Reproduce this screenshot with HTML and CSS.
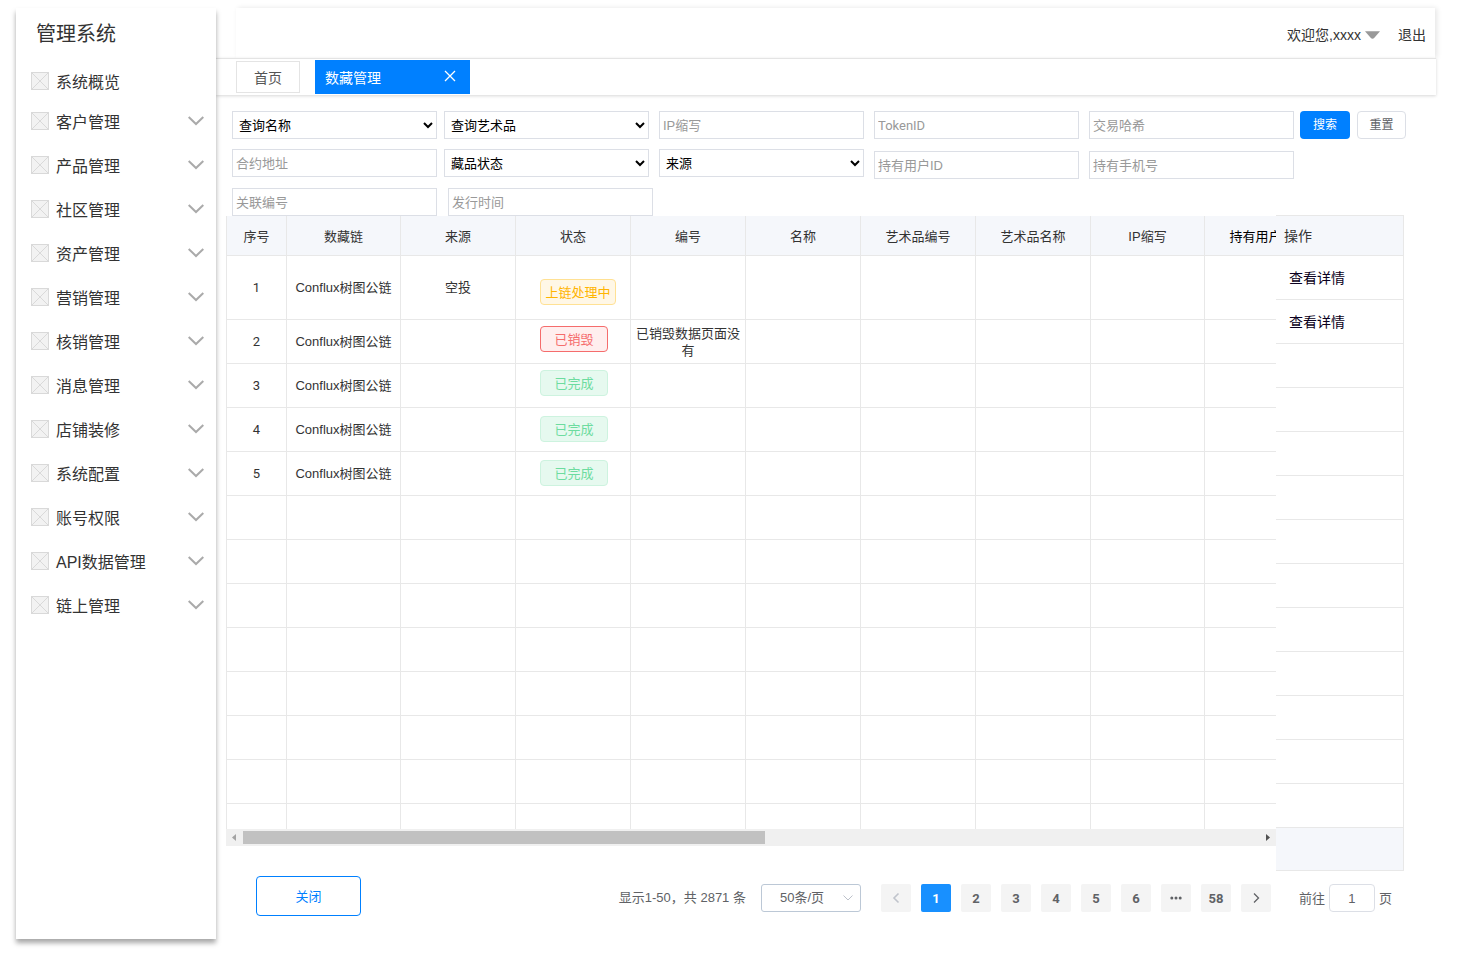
FILE: index.html
```html
<!DOCTYPE html>
<html lang="zh-CN">
<head>
<meta charset="utf-8">
<title>管理系统</title>
<link rel="stylesheet" href="styles.css">
</head>
<body>
<svg class="defs" width="0" height="0" aria-hidden="true">
  <symbol id="box" viewBox="0 0 18 18"><rect x=".5" y=".5" width="17" height="17" fill="#f2f2f2" stroke="#d9d9d9"/><path d="M1 1L17 17M17 1L1 17" stroke="#d9d9d9" fill="none"/></symbol>
  <symbol id="down" viewBox="0 0 16 10"><path d="M.7 1L8 8L15.300 1" stroke="#aaa" stroke-width="2" fill="none"/></symbol>
</svg>
<div class="shell">
  <nav class="sidebar">
    <h1 class="brand">管理系统</h1>
    <ul class="menu">
      <li><a class="item item-first" href="#"><svg class="box"><use href="#box"/></svg><span>系统概览</span></a></li>
      <li><a class="item" href="#"><svg class="box"><use href="#box"/></svg><span>客户管理</span><svg class="down"><use href="#down"/></svg></a></li>
      <li><a class="item" href="#"><svg class="box"><use href="#box"/></svg><span>产品管理</span><svg class="down"><use href="#down"/></svg></a></li>
      <li><a class="item" href="#"><svg class="box"><use href="#box"/></svg><span>社区管理</span><svg class="down"><use href="#down"/></svg></a></li>
      <li><a class="item" href="#"><svg class="box"><use href="#box"/></svg><span>资产管理</span><svg class="down"><use href="#down"/></svg></a></li>
      <li><a class="item" href="#"><svg class="box"><use href="#box"/></svg><span>营销管理</span><svg class="down"><use href="#down"/></svg></a></li>
      <li><a class="item" href="#"><svg class="box"><use href="#box"/></svg><span>核销管理</span><svg class="down"><use href="#down"/></svg></a></li>
      <li><a class="item" href="#"><svg class="box"><use href="#box"/></svg><span>消息管理</span><svg class="down"><use href="#down"/></svg></a></li>
      <li><a class="item" href="#"><svg class="box"><use href="#box"/></svg><span>店铺装修</span><svg class="down"><use href="#down"/></svg></a></li>
      <li><a class="item" href="#"><svg class="box"><use href="#box"/></svg><span>系统配置</span><svg class="down"><use href="#down"/></svg></a></li>
      <li><a class="item" href="#"><svg class="box"><use href="#box"/></svg><span>账号权限</span><svg class="down"><use href="#down"/></svg></a></li>
      <li><a class="item" href="#"><svg class="box"><use href="#box"/></svg><span>API数据管理</span><svg class="down"><use href="#down"/></svg></a></li>
      <li><a class="item" href="#"><svg class="box"><use href="#box"/></svg><span>链上管理</span><svg class="down"><use href="#down"/></svg></a></li>
    </ul>
  </nav>

  <main class="main">
    <header class="topbar">
      <button class="user" type="button">欢迎您,xxxx<svg class="caret" viewBox="0 0 16 8"><path d="M0 0H16L10 7Q8 9 6 7Z" fill="#999"/></svg></button>
      <a class="logout" href="#">退出</a>
    </header>
    <div class="tabs">
      <a class="tab" href="#">首页</a>
      <div class="tab-active"><span>数藏管理</span><button class="tab-close" type="button" aria-label="关闭标签"><svg width="12" height="12" viewBox="0 0 12 12"><path d="M1 1L11 11M11 1L1 11" stroke="#fff" stroke-width="1.300" fill="none"/></svg></button></div>
    </div>

    <form class="filters">
      <div class="filter-top">
        <div class="fields">
          <div class="group group-a">
            <select class="field field-select" aria-label="查询名称"><option>查询名称</option></select>
            <select class="field field-select" aria-label="查询艺术品"><option>查询艺术品</option></select>
            <input class="field" aria-label="合约地址" placeholder="合约地址">
            <select class="field field-select" aria-label="藏品状态"><option>藏品状态</option></select>
          </div>
          <div class="group group-b">
            <input class="field" aria-label="IP缩写" placeholder="IP缩写">
            <select class="field field-select" aria-label="来源"><option>来源</option></select>
          </div>
          <div class="group group-c">
            <input class="field field-latin" aria-label="TokenID" placeholder="TokenID">
            <input class="field" aria-label="交易哈希" placeholder="交易哈希">
            <input class="field" aria-label="持有用户ID" placeholder="持有用户ID">
            <input class="field" aria-label="持有手机号" placeholder="持有手机号">
          </div>
        </div>
        <div class="actions">
          <button class="btn btn-primary" type="button">搜索</button>
          <button class="btn btn-plain" type="reset">重置</button>
        </div>
      </div>
      <div class="filter-bottom">
        <input class="field" aria-label="关联编号" placeholder="关联编号">
        <input class="field" aria-label="发行时间" placeholder="发行时间">
      </div>
    </form>

    <div class="grid">
      <div class="grid-left">
        <div class="viewport">
          <table class="table">
            <colgroup><col class="c-no"><col class="c-chain"><col class="c-std"><col class="c-std"><col class="c-std"><col class="c-std"><col class="c-std"><col class="c-std"><col class="c-chain"><col class="c-std"></colgroup>
            <thead>
              <tr><th>序号</th><th>数藏链</th><th>来源</th><th>状态</th><th>编号</th><th>名称</th><th>艺术品编号</th><th>艺术品名称</th><th>IP缩写</th><th class="strong">持有用户ID</th></tr>
            </thead>
            <tbody>
              <tr class="tall"><td class="num">1</td><td>Conflux树图公链</td><td>空投</td><td class="status status-low"><span class="tag tag-pending">上链处理中</span></td><td></td><td></td><td></td><td></td><td></td><td></td></tr>
              <tr><td class="num">2</td><td>Conflux树图公链</td><td></td><td class="status status-high"><span class="tag tag-destroyed">已销毁</span></td><td>已销毁数据页面没有</td><td></td><td></td><td></td><td></td><td></td></tr>
              <tr><td class="num">3</td><td>Conflux树图公链</td><td></td><td class="status status-high"><span class="tag tag-done">已完成</span></td><td></td><td></td><td></td><td></td><td></td><td></td></tr>
              <tr><td class="num">4</td><td>Conflux树图公链</td><td></td><td class="status"><span class="tag tag-done">已完成</span></td><td></td><td></td><td></td><td></td><td></td><td></td></tr>
              <tr><td class="num">5</td><td>Conflux树图公链</td><td></td><td class="status"><span class="tag tag-done">已完成</span></td><td></td><td></td><td></td><td></td><td></td><td></td></tr>
              <tr><td></td><td></td><td></td><td></td><td></td><td></td><td></td><td></td><td></td><td></td></tr>
              <tr><td></td><td></td><td></td><td></td><td></td><td></td><td></td><td></td><td></td><td></td></tr>
              <tr><td></td><td></td><td></td><td></td><td></td><td></td><td></td><td></td><td></td><td></td></tr>
              <tr><td></td><td></td><td></td><td></td><td></td><td></td><td></td><td></td><td></td><td></td></tr>
              <tr><td></td><td></td><td></td><td></td><td></td><td></td><td></td><td></td><td></td><td></td></tr>
              <tr><td></td><td></td><td></td><td></td><td></td><td></td><td></td><td></td><td></td><td></td></tr>
              <tr><td></td><td></td><td></td><td></td><td></td><td></td><td></td><td></td><td></td><td></td></tr>
              <tr><td></td><td></td><td></td><td></td><td></td><td></td><td></td><td></td><td></td><td></td></tr>
            </tbody>
          </table>
        </div>
        <div class="scrollbar" aria-hidden="true">
          <svg class="arrow" viewBox="0 0 17 17"><path d="M10 5V12L6 8.500Z" fill="#a3a3a3"/></svg>
          <div class="track"><div class="thumb"></div></div>
          <svg class="arrow" viewBox="0 0 17 17"><path d="M7 5V12L11 8.500Z" fill="#505050"/></svg>
        </div>
      </div>
      <table class="ops">
        <thead><tr><th>操作</th></tr></thead>
        <tbody>
          <tr><td><a href="#">查看详情</a></td></tr>
          <tr><td><a href="#">查看详情</a></td></tr>
          <tr><td></td></tr><tr><td></td></tr><tr><td></td></tr><tr><td></td></tr><tr><td></td></tr><tr><td></td></tr>
          <tr><td></td></tr><tr><td></td></tr><tr><td></td></tr><tr><td></td></tr><tr><td></td></tr>
        </tbody>
        <tfoot><tr><td></td></tr></tfoot>
      </table>
    </div>

    <footer class="footer">
      <button class="btn-close" type="button">关闭</button>
      <div class="pager">
        <span class="total">显示1-50，共 2871 条</span>
        <div class="size">
          <select class="size-select" aria-label="每页条数"><option>50条/页</option></select>
          <svg class="size-arrow" viewBox="0 0 10 6"><path d="M.5 .5L5 5L9.500 .5" stroke="#bcc1ca" fill="none"/></svg>
        </div>
        <div class="pages">
          <button class="page" type="button" aria-label="上一页" disabled><svg width="8" height="12" viewBox="0 0 8 12"><path d="M6.500 1.500L2 6L6.500 10.500" stroke="#c0c4cc" stroke-width="1.600" fill="none"/></svg></button>
          <button class="page page-current" type="button">1</button>
          <button class="page" type="button">2</button>
          <button class="page" type="button">3</button>
          <button class="page" type="button">4</button>
          <button class="page" type="button">5</button>
          <button class="page" type="button">6</button>
          <button class="page" type="button" aria-label="更多页"><svg width="12" height="4" viewBox="0 0 12 4"><circle cx="1.800" cy="2" r="1.500" fill="#606266"/><circle cx="6" cy="2" r="1.500" fill="#606266"/><circle cx="10.200" cy="2" r="1.500" fill="#606266"/></svg></button>
          <button class="page" type="button">58</button>
          <button class="page" type="button" aria-label="下一页"><svg width="8" height="12" viewBox="0 0 8 12"><path d="M2 1.500L6.500 6L2 10.500" stroke="#606266" stroke-width="1.300" fill="none"/></svg></button>
        </div>
        <label class="jump">前往<input class="jump-input" value="1">页</label>
      </div>
    </footer>
  </main>
</div>
</body>
</html>
```
FILE: styles.css
```css
* { box-sizing: border-box; }
body {
  margin: 0;
  background: #fff;
  color: #333;
  font: 13px/17px "Liberation Sans", "Noto Sans CJK SC", sans-serif;
}
button, input, select { font: inherit; color: inherit; margin: 0; }
button { padding: 0; border: 0; background: none; cursor: pointer; }
a { color: inherit; text-decoration: none; }
.defs { position: absolute; }

.shell { display: flex; padding: 8px 22px 24px 16px; }

/* Sidebar */
.sidebar {
  flex: 0 0 200px;
  z-index: 1;
  background: #fff;
  box-shadow: 0 4px 5px rgba(0, 0, 0, .35);
}
.brand { margin: 0 0 2px; padding-left: 20px; font-size: 20px; font-weight: 400; line-height: 53px; }
.menu { margin: 0; padding: 0; list-style: none; }
.item { display: flex; align-items: center; height: 44px; padding: 0 12px 0 15px; font-size: 16px; line-height: 24px; }
.item span { padding-top: 4px; }
.item-first { height: 36px; }
.box { width: 18px; height: 18px; margin-right: 7px; }
.down { width: 16px; height: 10px; margin-left: auto; }

/* Header and tabs */
.main { flex: 1; min-width: 0; }
.topbar {
  display: flex;
  justify-content: flex-end;
  align-items: center;
  gap: 18px;
  height: 50px;
  margin: 0 1px 0 20px;
  padding: 4px 9px 0 0;
  box-shadow: 2px 0 5px rgba(0, 0, 0, .1);
  font-size: 14px;
}
.user { display: flex; align-items: center; gap: 4px; font-size: 14px; }
.caret { width: 15px; height: 8px; }
.tabs {
  display: flex;
  align-items: center;
  gap: 15px;
  position: relative;
  height: 37px;
  padding-left: 20px;
  border-top: 1px solid #e4e4e4;
  background: #fff;
  box-shadow: 0 1px 3px rgba(0, 0, 0, .16);
  font-size: 14px;
}
.tab { padding: 8px 17px 6px 17px; border: 1px solid #e4e4e4; line-height: 16px; color: #555; }
.tab-active {
  display: flex;
  align-items: center;
  justify-content: space-between;
  width: 155px;
  height: 34px;
  padding: 0 14px 0 10px;
  background: #0080ff;
  color: #fff;
}
.tab-active span { padding-top: 2px; }
.tab-close { display: flex; padding: 0 0 3px; }

/* Filters */
.filters { padding: 16px 30px 0 16px; }
.filter-top { display: flex; gap: 6px; }
.fields { display: flex; flex: 1; align-items: flex-start; gap: 10px; min-width: 0; }
.group { display: grid; gap: 10px; min-width: 0; }
.group-a { flex: 417 1 0; grid-template-columns: 1fr 1fr; column-gap: 7px; }
.group-b { flex: 205 1 0; }
.group-c { flex: 420 1 0; grid-template-columns: 1fr 1fr; row-gap: 12px; }
.field {
  width: 100%;
  min-width: 0;
  height: 28px;
  padding: 0 3px;
  border: 1px solid #dcdfe6;
  border-radius: 0;
  background: #fff;
}
.field::placeholder { color: #999; opacity: 1; }
.field-select { padding: 0 2px; color: #000; }
.field-latin { font-family: Roboto, sans-serif; }
.actions { display: flex; align-items: flex-start; gap: 7px; }
.btn { height: 28px; padding-top: 1px; border-radius: 4px; font-size: 12px; }
.btn-primary { width: 50px; background: #0080ff; color: #fff; }
.btn-plain { width: 49px; border: 1px solid #dcdfe6; color: #606266; }
.filter-bottom { display: flex; gap: 11px; padding-top: 9px; }
.filter-bottom .field { width: 205px; }

/* Data grid */
.grid { display: flex; align-items: flex-start; margin-top: -1px; padding: 0 32px 0 10px; }
.grid-left { flex: 1; min-width: 0; padding-top: 1px; }
.viewport { height: 613px; overflow: hidden; }
.table { width: 1094px; table-layout: fixed; border-spacing: 0; border-left: 1px solid #e8e8e8; }
.c-no { width: 60px; }
.c-chain { width: 114px; }
.c-std { width: 115px; }
.table th, .table td {
  height: 44px;
  padding: 0 4px;
  border-right: 1px solid #e8e8e8;
  border-bottom: 1px solid #e8e8e8;
  text-align: center;
  font-weight: 400;
}
.table th, .ops th { height: 40px; background: #f5f7fb; }
.table th { padding-top: 1px; }
.table .strong { color: #000; }
.table .tall td { height: 64px; }
.table .num { font-family: Roboto, sans-serif; }
.table .status { padding: 0 0 1px 24px; text-align: left; }
.table .status-low { padding-top: 9px; }
.table .status-high { padding-bottom: 6px; }
.tag {
  display: block;
  width: 68px;
  padding: 4px 0 3px;
  border: 1px solid;
  border-radius: 4px;
  text-align: center;
}
.tag-pending { width: 76px; background: #fff7e6; border-color: #ffe194; color: #ffb400; }
.tag-destroyed { background: #ffeeee; border-color: #f56c6c; color: #f56c6c; }
.tag-done { background: #e6f9ef; border-color: #cdf3df; color: #6ddc9f; }

.scrollbar { display: flex; height: 17px; background: #f0f0f0; }
.arrow { flex: none; width: 17px; height: 17px; }
.track { flex: 1; padding: 2px 0; }
.thumb { width: 51.4%; height: 13px; background: #c1c1c1; }

.ops { flex: none; width: 128px; border-spacing: 0; border-top: 1px solid #e8e8e8; border-right: 1px solid #e8e8e8; }
.ops th, .ops td { height: 44px; padding: 2px 0 0 13px; border-bottom: 1px solid #e8e8e8; text-align: left; font-size: 14px; font-weight: 400; }
.ops th { height: 40px; padding: 2px 0 0 8px; }
.ops a { color: #0a0020; }
.ops tfoot td { height: 43px; background: #f5f7fb; }

/* Footer */
.footer { display: flex; align-items: center; justify-content: space-between; padding: 5px 44px 23px 40px; }
.btn-close { width: 105px; height: 40px; border: 1px solid #0080ff; border-radius: 4px; color: #0080ff; }
.pager { display: flex; align-items: center; padding-top: 4px; color: #606266; }
.total { margin-right: 15px; padding-bottom: 2px; }
.size { position: relative; margin-right: 20px; }
.size-select {
  display: block;
  width: 100px;
  height: 28px;
  padding: 0 18px 2px;
  appearance: none;
  border: 1px solid #bcc8d6;
  border-radius: 3px;
  background: #fff;
}
.size-arrow { position: absolute; right: 8px; top: 11px; width: 10px; height: 6px; pointer-events: none; }
.pages { display: flex; gap: 10px; margin-right: 28px; }
.page {
  display: flex;
  align-items: center;
  justify-content: center;
  width: 30px;
  height: 28px;
  border-radius: 2px;
  background: #f4f4f4;
  font-family: Roboto, sans-serif;
  font-weight: 700;
}
.page-current { background: #1890ff; color: #fff; }
.jump { display: flex; align-items: center; gap: 4px; }
.jump-input { width: 46px; height: 28px; padding: 0; border: 1px solid #dcdfe6; border-radius: 4px; text-align: center; }
```
